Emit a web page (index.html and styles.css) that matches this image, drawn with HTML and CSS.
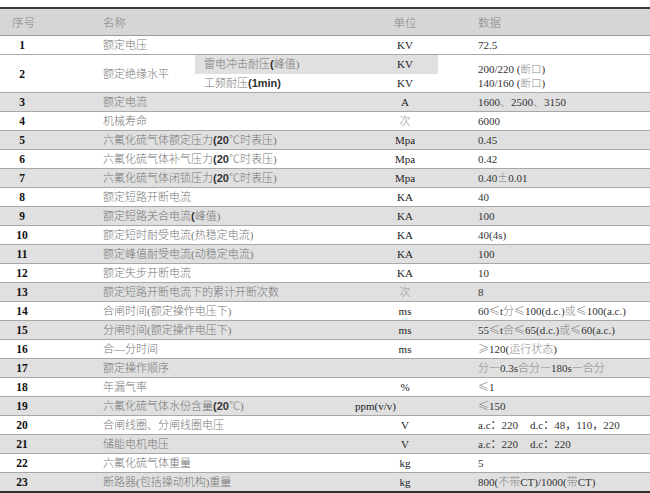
FILE: index.html
```html
<!DOCTYPE html>
<html lang="zh">
<head>
<meta charset="utf-8">
<link rel="stylesheet" href="styles.css">
</head>
<body>
<table class="tbl">
  <colgroup>
    <col class="c-no"><col class="c-na"><col class="c-nb"><col class="c-un"><col class="c-da">
  </colgroup>
  <thead>
    <tr class="hd">
      <th class="no">序号</th>
      <th class="nm" colspan="2">名称</th>
      <th class="un">单位</th>
      <th class="da">数据</th>
    </tr>
  </thead>
  <tbody>
    <tr><td class="no">1</td><td class="nm" colspan="2">额定电压</td><td class="un">KV</td><td class="da">72.5</td></tr>
    <tr class="sub1">
      <td class="no" rowspan="2">2</td>
      <td class="nm" rowspan="2">额定绝缘水平</td>
      <td class="sb gcell">雷电冲击耐压<b class="sans">(</b>峰值)</td>
      <td class="un gcell">KV</td>
      <td class="da two" rowspan="2"><div class="ln">200/220 (<span class="zh">断口</span>)</div><div class="ln">140/160 (<span class="zh">断口</span>)</div></td>
    </tr>
    <tr class="sub2">
      <td class="sb">工频耐压<b class="sans">(1min)</b></td>
      <td class="un">KV</td>
    </tr>
    <tr class="g"><td class="no">3</td><td class="nm" colspan="2">额定电流</td><td class="un">A</td><td class="da">1600<span class="zh">、</span>2500<span class="zh">、</span>3150</td></tr>
    <tr><td class="no">4</td><td class="nm" colspan="2">机械寿命</td><td class="un cn">次</td><td class="da">6000</td></tr>
    <tr class="g"><td class="no">5</td><td class="nm" colspan="2">六氟化硫气体额定压力<b class="sans">(20</b>℃时表压)</td><td class="un">Mpa</td><td class="da">0.45</td></tr>
    <tr><td class="no">6</td><td class="nm" colspan="2">六氟化硫气体补气压力<b class="sans">(20</b>℃时表压)</td><td class="un">Mpa</td><td class="da">0.42</td></tr>
    <tr class="g"><td class="no">7</td><td class="nm" colspan="2">六氟化硫气体闭锁压力<b class="sans">(20</b>℃时表压)</td><td class="un">Mpa</td><td class="da">0.40<span class="sym">±</span>0.01</td></tr>
    <tr><td class="no">8</td><td class="nm" colspan="2">额定短路开断电流</td><td class="un">KA</td><td class="da">40</td></tr>
    <tr class="g"><td class="no">9</td><td class="nm" colspan="2">额定短路关合电流<b class="sans">(</b>峰值)</td><td class="un">KA</td><td class="da">100</td></tr>
    <tr><td class="no">10</td><td class="nm" colspan="2">额定短时耐受电流(热稳定电流)</td><td class="un">KA</td><td class="da">40(4s)</td></tr>
    <tr class="g"><td class="no">11</td><td class="nm" colspan="2">额定峰值耐受电流(动稳定电流)</td><td class="un">KA</td><td class="da">100</td></tr>
    <tr><td class="no">12</td><td class="nm" colspan="2">额定失步开断电流</td><td class="un">KA</td><td class="da">10</td></tr>
    <tr class="g"><td class="no">13</td><td class="nm" colspan="2">额定短路开断电流下的累计开断次数</td><td class="un cn">次</td><td class="da">8</td></tr>
    <tr><td class="no">14</td><td class="nm" colspan="2">合闸时间(额定操作电压下)</td><td class="un">ms</td><td class="da">60<span class="sym">≤</span>t<span class="zh">分</span><span class="sym">≤</span>100(d.c.)<span class="zh">或</span><span class="sym">≤</span>100(a.c.)</td></tr>
    <tr class="g"><td class="no">15</td><td class="nm" colspan="2">分闸时间(额定操作电压下)</td><td class="un">ms</td><td class="da">55<span class="sym">≤</span>t<span class="zh">合</span><span class="sym">≤</span>65(d.c.)<span class="zh">或</span><span class="sym">≤</span>60(a.c.)</td></tr>
    <tr><td class="no">16</td><td class="nm" colspan="2">合—分时间</td><td class="un">ms</td><td class="da"><span class="sym">≥</span>120(<span class="zh">运行状态</span>)</td></tr>
    <tr class="g"><td class="no">17</td><td class="nm" colspan="2">额定操作顺序</td><td class="un"></td><td class="da"><span class="zh">分—</span>0.3s<span class="zh">合分—</span>180s<span class="zh">—合分</span></td></tr>
    <tr><td class="no">18</td><td class="nm" colspan="2">年漏气率</td><td class="un">%</td><td class="da"><span class="sym">≤</span>1</td></tr>
    <tr class="g"><td class="no">19</td><td class="nm" colspan="2">六氟化硫气体水份含量<b class="sans">(20</b>℃)</td><td class="un ppm">ppm(v/v)</td><td class="da"><span class="sym">≤</span>150</td></tr>
    <tr><td class="no">20</td><td class="nm" colspan="2">合闸线圈、分闸线圈电压</td><td class="un">V</td><td class="da">a.c：220<span class="gap"></span>d.c：48，110，220</td></tr>
    <tr class="g"><td class="no">21</td><td class="nm" colspan="2">储能电机电压</td><td class="un">V</td><td class="da">a.c：220<span class="gap"></span>d.c：220</td></tr>
    <tr><td class="no">22</td><td class="nm" colspan="2">六氟化硫气体重量</td><td class="un">kg</td><td class="da">5</td></tr>
    <tr class="g last"><td class="no">23</td><td class="nm" colspan="2">断路器(包括操动机构)重量</td><td class="un">kg</td><td class="da">800(<span class="zh">不带</span>CT)/1000(<span class="zh">带</span>CT)</td></tr>
  </tbody>
</table>
</body>
</html>
```
FILE: styles.css
```css
html, body {
  margin: 0;
  padding: 0;
  background: #ffffff;
}
body {
  padding-top: 7px;
  font-family: "Liberation Serif", "Noto Sans CJK SC", serif;
  font-size: 11px;
  color: #333;
}
.tbl {
  width: 650px;
  border-collapse: separate;
  border-spacing: 0;
  table-layout: fixed;
  border-top: 2px solid #3a3a3a;
}
.c-no { width: 44px; }
.c-na { width: 151px; }
.c-nb { width: 177px; }
.c-un { width: 66px; }
.c-da { width: 212px; }

.tbl th, .tbl td {
  padding: 0;
  height: 18px;
  line-height: 18px;
  border-bottom: 1px solid #a8a8a8;
  white-space: nowrap;
  overflow: visible;
  vertical-align: middle;
}
.tbl th {
  height: 26px;
  line-height: 26px;
  background: #d6d6d6;
  font-family: "Noto Sans CJK SC", sans-serif;
  font-weight: 300;
  font-size: 11.5px;
  color: #858585;
  border-bottom: 1px solid #9a9a9a;
}
.tbl th.no { text-align: left; padding-left: 12px; }
.tbl th.nm { text-align: left; padding-left: 58px; }
.tbl th.un { text-align: center; }
.tbl th.da { text-align: left; padding-left: 40px; }

.g td { background: #e0e0e0; }
.no {
  text-align: center;
  font-weight: bold;
  color: #111;
  font-size: 11.5px;
}
.nm {
  padding-left: 59px !important;
  color: #777;
  font-weight: 300;
  text-align: left;
}
.sb {
  padding-left: 9px !important;
  color: #777;
  font-weight: 300;
  text-align: left;
}
.sans {
  font-family: "Liberation Sans", sans-serif;
  font-weight: bold;
  color: #333;
  line-height: 1;
}
.un {
  text-align: center;
  color: #222;
}
.un.cn { color: #999; font-weight: 300; }
.un.ppm { text-align: left; text-indent: -17px; }
.da {
  text-align: left;
  padding-left: 40px !important;
  color: #333;
}
.zh {
  font-family: "Noto Sans CJK SC", sans-serif;
  font-weight: 300;
  color: #888;
  line-height: 1;
}
.sym {
  font-family: "Noto Sans CJK SC", sans-serif;
  font-weight: 300;
  color: #777;
  line-height: 1;
}
.da.two {
  padding-top: 4px !important;
  box-sizing: border-box;
}
.ln {
  line-height: 14px;
  height: 14px;
}
.two .zh { font-size: 10.5px; }
.gap { display: inline-block; width: 12px; }

.sub1 td.gcell {
  background: #e0e0e0;
  border-bottom: 1px solid #e0e0e0;
}
.last td { border-bottom: 2px solid #2e2e2e; }
```
